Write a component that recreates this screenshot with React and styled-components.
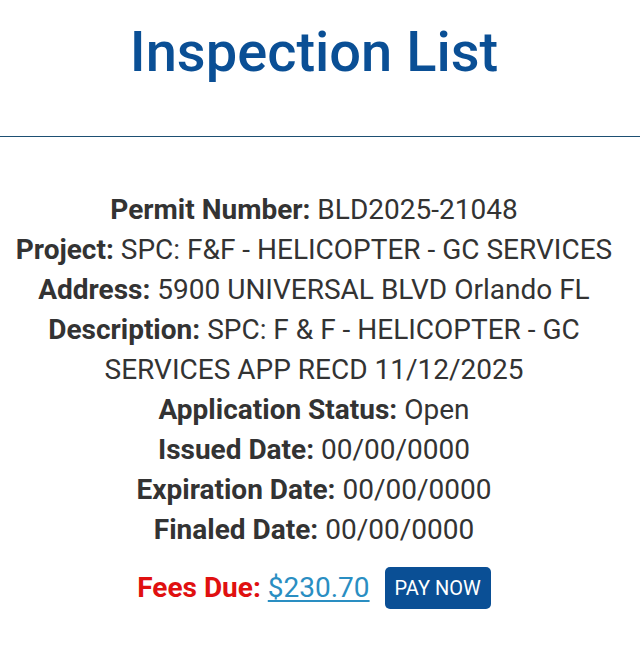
import styled, { createGlobalStyle } from "styled-components";

const Global = createGlobalStyle`
  body {
    margin: 0;
    background: #fff;
    font-family: Roboto, "Noto Sans", sans-serif;
  }
`

const Page = styled.div`
  width: 640px;
`

const Header = styled.header`
  height: 137px;
  border-bottom: 1px solid #1d4f73;
  display: flex;
  justify-content: center;
  padding: 18px 12px 0 0;
  box-sizing: border-box;
`

const Title = styled.h1`
  margin: 0;
  font-size: 56px;
  font-weight: 500;
  line-height: 68px;
  color: #0a4f95;
`

const Details = styled.section`
  padding: 53px 12px 0 0;
  text-align: center;
  color: #333;
  font-size: 28px;
  line-height: 40px;
`

const Line = styled.div``

const Label = styled.b`
  font-weight: 700;
  color: ${p => p.$color || "#333"};
`

const FeesRow = styled.div`
  margin-top: 17px;
  display: flex;
  justify-content: center;
  align-items: center;
  gap: 15px;
`

const Amount = styled.a`
  color: #2a8ec2;
  text-decoration: underline;
  text-underline-offset: 3px;
`

const PayButton = styled.button`
  background: #0a4f95;
  color: #fff;
  border: none;
  border-radius: 5px;
  font-family: Roboto, sans-serif;
  font-size: 20px;
  padding: 0 10px;
  height: 42px;
  cursor: pointer;
`

const rows = [
  ["Permit Number:", "BLD2025-21048"],
  ["Project:", "SPC: F&F - HELICOPTER - GC SERVICES"],
  ["Address:", "5900 UNIVERSAL BLVD Orlando FL"],
  ["Description:", "SPC: F & F - HELICOPTER - GC SERVICES APP RECD 11/12/2025"],
  ["Application Status:", "Open"],
  ["Issued Date:", "00/00/0000"],
  ["Expiration Date:", "00/00/0000"],
  ["Finaled Date:", "00/00/0000"],
]

const App = () => {
  return (
    <Page>
      <Global />
      <Header>
        <Title>Inspection List</Title>
      </Header>
      <Details>
        {rows.map(([label, value]) => (
          <Line key={label}>
            <Label>{label}</Label> {value}
          </Line>
        ))}
        <FeesRow>
          <span>
            <Label $color="#e01010">Fees Due:</Label> <Amount href="#">$230.70</Amount>
          </span>
          <PayButton>PAY NOW</PayButton>
        </FeesRow>
      </Details>
    </Page>
  )
}

export default App
